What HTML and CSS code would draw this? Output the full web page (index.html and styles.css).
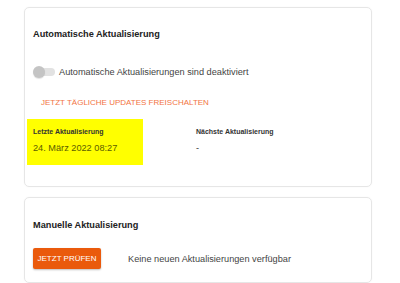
FILE: index.html
```html
<!DOCTYPE html>
<html lang="de">
<head>
    <meta charset="UTF-8">
    <meta name="viewport" content="width=device-width, initial-scale=1.0">
    <title>Aktualisierung</title>
    <link rel="stylesheet" href="styles.css">
</head>
<body>
    <div class="page">
        <div class="card card-auto">
            <h2 class="card-title">Automatische Aktualisierung</h2>
            <div class="switch-row">
                <span class="switch"><span class="switch-thumb"></span></span>
                <span class="switch-label">Automatische Aktualisierungen sind deaktiviert</span>
            </div>
            <a class="text-link" href="#">Jetzt tägliche Updates freischalten</a>
            <div class="info-grid">
                <div class="info-item highlight">
                    <div class="info-label">Letzte Aktualisierung</div>
                    <div class="info-value">24. März 2022 08:27</div>
                </div>
                <div class="info-item">
                    <div class="info-label">Nächste Aktualisierung</div>
                    <div class="info-value">-</div>
                </div>
            </div>
        </div>

        <div class="card card-manual">
            <h2 class="card-title">Manuelle Aktualisierung</h2>
            <div class="check-row">
                <button class="btn-check">Jetzt prüfen</button>
                <span class="check-status">Keine neuen Aktualisierungen verfügbar</span>
            </div>
        </div>
    </div>
</body>
</html>
```

FILE: styles.css
```css
body {
    margin: 0;
    font-family: "Liberation Sans", Arial, Helvetica, sans-serif;
    font-size: 9.2px;
    color: #333;
    background-color: #fff;
}

.page {
    padding: 7px 0 0 24px;
    display: flex;
    flex-direction: column;
    gap: 10px;
    width: 348px;
}

.card {
    border: 1px solid #e6e6e6;
    border-radius: 5px;
    box-shadow: 0 0 2px rgba(0, 0, 0, 0.04);
    padding: 20px 8px 0 8px;
    box-sizing: border-box;
}

.card-auto {
    height: 180px;
}

.card-manual {
    height: 86px;
    padding-top: 21px;
}

.card-title {
    margin: 0;
    font-size: 9.2px;
    line-height: 12px;
    font-weight: bold;
    color: #222;
}

.switch-row {
    display: flex;
    align-items: center;
    height: 14px;
    margin-top: 25px;
}

.switch {
    position: relative;
    width: 21px;
    height: 8px;
    border-radius: 4px;
    background-color: #e2e2e2;
    margin-left: 1px;
    margin-right: 4px;
}

.switch-thumb {
    position: absolute;
    left: -1px;
    top: -2px;
    width: 12px;
    height: 12px;
    border-radius: 50%;
    background-color: #c4c4c4;
    box-shadow: 0 1px 1px rgba(0, 0, 0, 0.12);
}

.switch-label {
    color: #444;
}

.text-link {
    display: inline-block;
    margin: 19px 0 0 8px;
    font-size: 8px;
    line-height: 10px;
    text-transform: uppercase;
    text-decoration: none;
    color: #f2743f;
}

.info-grid {
    display: grid;
    grid-template-columns: 163px 1fr;
    margin-top: 11px;
}

.info-item {
    height: 46px;
    padding: 8px 6px 0 6px;
    margin-left: -6px;
    box-sizing: border-box;
}

.highlight {
    width: 116px;
    background-color: #ffff00;
}

.info-label {
    font-size: 7px;
    line-height: 9px;
    font-weight: bold;
    color: #333;
}

.info-value {
    margin-top: 6px;
    line-height: 12px;
    color: #333;
}

.highlight .info-value {
    color: #5c5c00;
}

.check-row {
    display: flex;
    align-items: center;
    margin-top: 17px;
}

.btn-check {
    width: 68px;
    height: 21px;
    padding: 0;
    border: none;
    border-radius: 2px;
    background-color: #ea5a0c;
    color: #fff;
    font-family: inherit;
    font-size: 8px;
    text-transform: uppercase;
    box-shadow: 0 1px 2px rgba(0, 0, 0, 0.25);
}

.check-status {
    margin-left: 27px;
    color: #444;
}
```
